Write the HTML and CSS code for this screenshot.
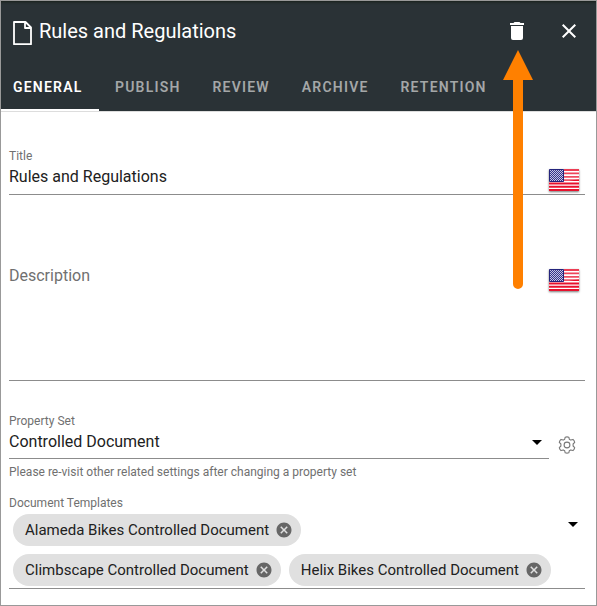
FILE: index.html
```html
<!DOCTYPE html>
<html lang="en">
<head>
<meta charset="utf-8">
<title>Rules and Regulations</title>
<link rel="stylesheet" href="styles.css">
</head>
<body>
<svg class="defs" width="0" height="0" aria-hidden="true">
  <defs>
    <pattern id="stars" width="2" height="2" patternUnits="userSpaceOnUse">
      <rect width="2" height="2" fill="#34348a"/>
      <path d="M0 0h1v1H0zM1 1h1v1H1z" fill="#c4c4e2"/>
    </pattern>
    <linearGradient id="shine" x1="0" y1="0" x2="0" y2="1">
      <stop offset="0" stop-color="#fff" stop-opacity=".18"/>
      <stop offset="1" stop-color="#fff" stop-opacity=".3"/>
    </linearGradient>
    <symbol id="flag" viewBox="0 0 30 22">
      <rect width="30" height="22" fill="#fff"/>
      <path d="M0 0h30v2H0zM0 3.500h30v1.800H0zM0 6.900h30v1.800H0zM0 10.200h30v1.800H0zM0 13.400h30v2.100H0zM0 16.700h30v2.100H0zM0 20h30v2H0z" fill="#e8112d"/>
      <path d="M15 0h15v10L15 13z" fill="url(#shine)"/>
      <rect width="15" height="13" fill="url(#stars)"/>
      <path d="M.5 .5h14v12H.5z" fill="none" stroke="#24247c"/>
    </symbol>
    <symbol id="remove" viewBox="0 0 24 24">
      <path d="M12 2C6.470 2 2 6.470 2 12s4.470 10 10 10 10-4.470 10-10S17.530 2 12 2m5 13.590L15.590 17 12 13.410 8.410 17 7 15.590 10.590 12 7 8.410 8.410 7 12 10.590 15.590 7 17 8.410 13.410 12z"/>
    </symbol>
  </defs>
</svg>
<div class="panel">
  <header class="header">
    <div class="titlebar">
      <svg class="doc" viewBox="0 0 20 26"><path d="M2 2h11.500L19 7.500V24.200H2zM13 2v6h6"/></svg>
      <h1 class="heading">Rules and Regulations</h1>
      <svg class="trash" viewBox="0 0 24 24"><path d="M19 4h-3.500l-1-1h-5l-1 1H5v2h14M6 19a2 2 0 0 0 2 2h8a2 2 0 0 0 2-2V7H6z"/></svg>
      <svg class="close" viewBox="0 0 24 24"><path d="M19 6.410L17.590 5 12 10.590 6.410 5 5 6.410 10.590 12 5 17.590 6.410 19 12 13.410 17.590 19 19 17.590 13.410 12z"/></svg>
    </div>
    <nav class="tabs">
      <a class="tab active">GENERAL</a>
      <a class="tab">PUBLISH</a>
      <a class="tab">REVIEW</a>
      <a class="tab">ARCHIVE</a>
      <a class="tab">RETENTION</a>
    </nav>
  </header>
  <main class="form">
    <section class="field title">
      <div class="text">
        <div class="label">Title</div>
        <div class="value">Rules and Regulations</div>
      </div>
      <svg class="flag"><use href="#flag"/></svg>
    </section>
    <section class="field description">
      <div class="value placeholder">Description</div>
      <svg class="flag"><use href="#flag"/></svg>
    </section>
    <div class="property-row">
      <section class="field property">
        <div class="text">
          <div class="label">Property Set</div>
          <div class="value">Controlled Document</div>
        </div>
        <span class="caret"></span>
      </section>
      <svg class="gear" viewBox="0 0 18 18"><path d="M7.200 1.200q1.800-.7 3.600 0l.5 2 1.500.9 2.200-.7q1.400 1.200 1.700 3L15.100 8v2l1.600 1.600q-.3 1.800-1.700 3l-2.200-.7-1.500.9-.5 2q-1.800.7-3.600 0l-.5-2-1.500-.9-2.200.7q-1.400-1.200-1.700-3L2.900 10V8L1.300 6.400q.3-1.800 1.700-3l2.200.7 1.500-.9z"/><circle cx="9" cy="9" r="2.900"/></svg>
    </div>
    <div class="hint">Please re-visit other related settings after changing a property set</div>
    <div class="label templates-label">Document Templates</div>
    <section class="field templates">
      <div class="chips">
        <span class="chip">Alameda Bikes Controlled Document<svg><use href="#remove"/></svg></span>
        <span class="chip">Climbscape Controlled Document<svg><use href="#remove"/></svg></span>
        <span class="chip">Helix Bikes Controlled Document<svg><use href="#remove"/></svg></span>
      </div>
      <span class="caret"></span>
    </section>
  </main>
  <svg class="arrow" viewBox="0 0 30 240"><path d="M15 0l15 30H20v204a5 5 0 0 1-10 0V30H0z"/></svg>
</div>
</body>
</html>
```
FILE: styles.css
```css
* { box-sizing: border-box; }
body { margin: 0; font-family: Roboto, sans-serif; }
.defs { position: absolute; }
svg { display: block; flex: none; }
.panel {
  position: relative;
  width: 597px;
  height: 606px;
  border: 1px solid #999;
  background: #fff;
  overflow: hidden;
}
.header {
  height: 110px;
  background: #2a3236;
  box-shadow: inset 0 3px 3px -2px #182018, 0 1px 0 #ddd;
  color: #fff;
}
.titlebar { display: flex; height: 62px; padding: 0 15px 0 11px; }
.doc { width: 20px; height: 26px; margin-top: 19px; fill: none; stroke: #fff; stroke-width: 1.8; stroke-linejoin: round; }
.heading { flex: 1; margin: 0; padding-left: 7px; font-size: 20px; font-weight: 400; line-height: 60px; }
.trash { width: 24px; height: 24px; margin: 18px 28px 0 0; fill: #fff; }
.close { width: 24px; height: 24px; margin-top: 18px; fill: #fff; }
.tabs { display: flex; height: 48px; }
.tab {
  padding: 0 16px;
  color: #a4a7a8;
  font-size: 14px;
  font-weight: 600;
  letter-spacing: 1.2px;
  line-height: 48px;
}
.tab.active { width: 98px; padding: 0 0 0 12px; color: #fff; border-bottom: 2px solid #fff; }
.form { padding: 0 11px 0 8px; }
.field { display: flex; justify-content: space-between; border-bottom: 1px solid #8c8c8c; }
.label, .hint { color: #707070; font-size: 12px; line-height: 16px; }
.value { color: #212121; font-size: 16px; line-height: 26px; }
.title { height: 84px; padding-top: 37px; }
.flag { width: 30px; height: 22px; margin-right: 6px; box-shadow: 0 1px 2px #777; }
.title .flag { margin-top: 21px; }
.description { height: 186px; padding-top: 68px; }
.description .flag { margin-top: 6px; }
.placeholder { color: #707070; }
.property-row { display: flex; height: 78px; }
.property { width: 540px; padding-top: 32px; }
.caret { width: 10px; height: 5px; background: #000; clip-path: polygon(0 0, 100% 0, 50% 100%); }
.property .caret { margin: 27px 7px 0 0; }
.gear { width: 18px; height: 18px; margin: 55px 0 0 9px; fill: none; stroke: #777; stroke-width: 1.1; stroke-linejoin: round; }
.hint { margin-top: 5px; }
.templates-label { margin-top: 15px; }
.templates { height: 78px; padding: 3px 0 0 4px; }
.chips { display: flex; flex-wrap: wrap; gap: 8px; width: 546px; align-content: flex-start; }
.chip {
  display: flex;
  align-items: center;
  height: 32px;
  padding: 0 8px 0 12px;
  border-radius: 16px;
  background: #e0e0e0;
  color: #212121;
  font-size: 15px;
  white-space: nowrap;
}
.chip svg { width: 18px; height: 18px; margin-left: 6px; fill: #666; }
.templates .caret { margin: 8px 7px 0 0; }
.arrow { position: absolute; left: 502px; top: 49px; width: 30px; height: 240px; fill: #ff8000; }
```
